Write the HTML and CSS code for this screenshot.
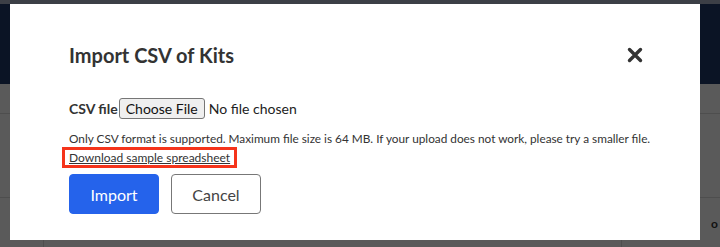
FILE: index.html
```html
<!DOCTYPE html>
<html lang="en">
<head>
<meta charset="utf-8">
<title>Import CSV of Kits</title>
<link rel="stylesheet" href="styles.css">
</head>
<body>
<div class="page">
  <div class="topstrip"></div>
  <div class="navbar"></div>
  <div class="content">
    <div class="row row-a"></div>
    <div class="row row-b"></div>
    <div class="row row-c">
      <div class="cell cell-1"></div>
      <div class="cell cell-2"></div>
      <div class="cell cell-3"><span class="peek">o</span></div>
    </div>
  </div>
</div>

<div class="modal" role="dialog" aria-labelledby="modal-title">
  <div class="modal-header">
    <h2 id="modal-title" class="modal-title">Import CSV of Kits</h2>
    <button class="close" aria-label="Close">
      <svg width="16" height="16" viewBox="0 0 16 16" aria-hidden="true">
        <path d="M2.5 2.5 L13.5 13.5 M13.5 2.5 L2.5 13.5" stroke="#333" stroke-width="3.4" stroke-linecap="round" fill="none"/>
      </svg>
    </button>
  </div>
  <form class="modal-body">
    <div class="file-row">
      <label class="file-label" for="csv">CSV file</label>
      <input id="csv" class="file-input" type="file" accept=".csv">
    </div>
    <p class="help">Only CSV format is supported. Maximum file size is 64 MB. If your upload does not work, please try a smaller file.</p>
    <div class="link-row">
      <span class="highlight"><a class="sample-link" href="#">Download sample spreadsheet</a></span>
    </div>
    <div class="actions">
      <button type="button" class="btn btn-primary">Import</button>
      <button type="button" class="btn btn-secondary">Cancel</button>
    </div>
  </form>
</div>
</body>
</html>
```
FILE: styles.css
```css
html, body {
  margin: 0;
  padding: 0;
}
body {
  width: 720px;
  height: 247px;
  overflow: hidden;
  font-family: Lato, "Open Sans", "Liberation Sans", sans-serif;
  color: #333;
  background: #5a5a5a;
  position: relative;
}
.page {
  display: flex;
  flex-direction: column;
  height: 247px;
}
.topstrip {
  height: 4px;
  background: #3c3f46;
}
.navbar {
  height: 80px;
  background: #0b1425;
}
.content {
  flex: 1;
  background: #5a5a5a;
  display: flex;
  flex-direction: column;
}
.row-a {
  height: 29px;
  border-bottom: 1px solid #4e4e4e;
}
.row-b {
  height: 83px;
  border-bottom: 1px solid #4e4e4e;
}
.row-c {
  flex: 1;
  display: grid;
  grid-template-columns: 44px 578px 1fr;
}
.cell {
  border-right: 1px solid #4e4e4e;
}
.cell-3 {
  border-right: none;
  text-align: right;
  padding-top: 14px;
}
.peek {
  font-size: 12px;
  font-weight: 700;
  color: #111;
  margin-right: 2px;
}

.modal {
  position: absolute;
  left: 10px;
  top: 4px;
  width: 690px;
  height: 236px;
  box-sizing: border-box;
  background: #fff;
  padding: 39px 57px 0 59px;
}
.modal-header {
  display: flex;
  justify-content: space-between;
  align-items: center;
  height: 24px;
}
.modal-title {
  margin: 0;
  font-size: 20px;
  line-height: 24px;
  font-weight: 700;
  color: #333;
}
.close {
  border: 0;
  background: none;
  padding: 0;
  width: 16px;
  height: 16px;
  display: flex;
  cursor: pointer;
}
.modal-body {
  margin: 0;
  display: flex;
  flex-direction: column;
  align-items: flex-start;
}
.file-row {
  margin-top: 31px;
  display: flex;
  align-items: center;
  height: 21px;
  font-size: 14px;
}
.file-label {
  font-weight: 700;
  color: #333;
}
.file-input {
  font-family: inherit;
  font-size: 14px;
  color: #222;
}
.file-input::file-selector-button {
  font-family: inherit;
  font-size: 14px;
  color: #111;
  height: 21px;
  padding: 0 6px;
  margin: 0 4px 0 1px;
  border: 1px solid #767676;
  border-radius: 3px;
  background: #efefef;
}
.help {
  margin: 12px 0 0;
  font-size: 11.8px;
  line-height: 15px;
  height: 15px;
  color: #333;
  white-space: nowrap;
}
.link-row {
  display: flex;
  margin-top: 1px;
  margin-left: -7px;
}
.highlight {
  display: block;
  border: 3px solid #f5341b;
  padding: 0 4px 0 4px;
  height: 15px;
  line-height: 15px;
}
.sample-link {
  display: block;
  font-size: 12px;
  line-height: 15px;
  color: #333;
  text-decoration: underline;
}
.actions {
  margin-top: 6px;
  display: flex;
  gap: 12px;
}
.btn {
  width: 90px;
  height: 40px;
  box-sizing: border-box;
  border-radius: 4px;
  font-family: inherit;
  font-size: 16px;
  cursor: pointer;
}
.btn-primary {
  background: #2563eb;
  border: 1px solid #2563eb;
  color: #fff;
}
.btn-secondary {
  background: #fff;
  border: 1px solid #777;
  color: #444;
}
```
